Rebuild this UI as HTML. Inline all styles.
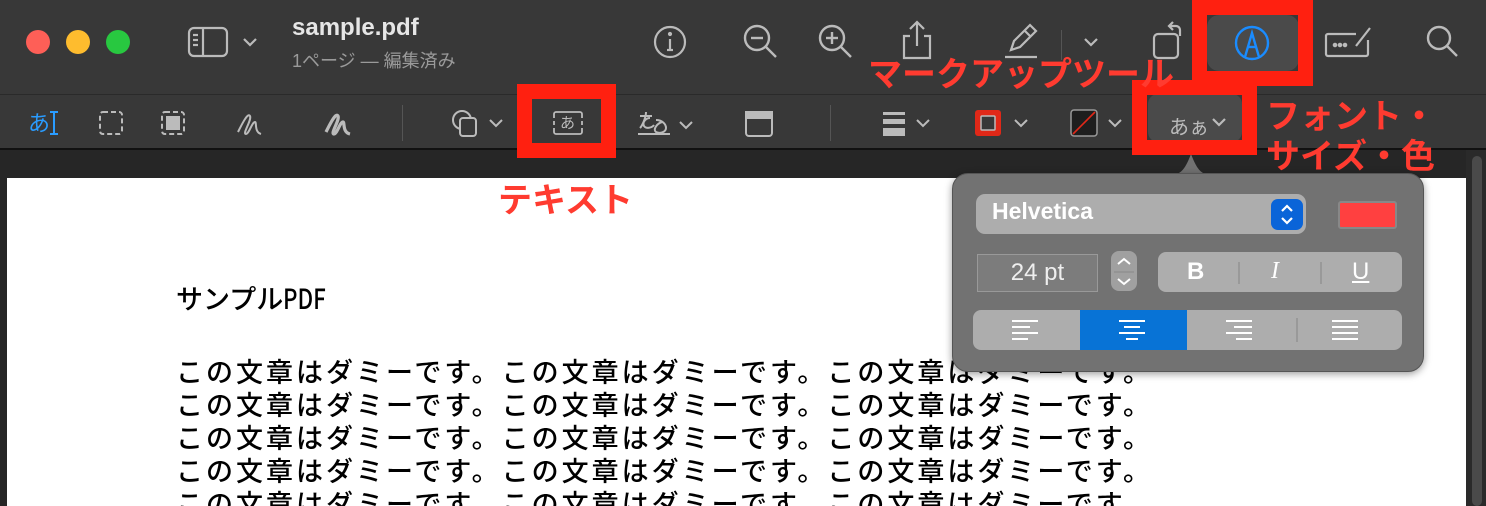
<!DOCTYPE html>
<html><head><meta charset="utf-8">
<style>
*{margin:0;padding:0;box-sizing:border-box}
html,body{width:1486px;height:506px;overflow:hidden}
body{background:#262626;position:relative;font-family:"Liberation Sans","Noto Sans CJK JP",sans-serif}
.abs{position:absolute}
.top{left:0;top:0;width:1486px;height:150px;background:#383838;border-bottom:2px solid #111}
.sep{left:0;top:94px;width:1486px;height:1px;background:#2a2a2a}
.dot{width:24px;height:24px;border-radius:50%;top:30px}
.page{left:7px;top:178px;width:1459px;height:328px;background:#fff}
.scroll{left:1466px;top:150px;width:20px;height:356px;background:#2a2a2a}
.thumb{left:1472px;top:156px;width:10px;height:350px;background:#4a4a4a;border-radius:5px}
.pdf{left:176px;font-family:"Noto Sans CJK JP",sans-serif;font-size:27px;font-weight:500;color:#000;letter-spacing:3px;white-space:nowrap;line-height:33px}
.red{border:15px solid #ff2010}
.lbl{color:#ff3b30;font-family:"Noto Sans CJK JP",sans-serif;font-weight:bold;font-size:34px;white-space:nowrap;line-height:40px}
svg{position:absolute;overflow:visible}
.pop{left:952px;top:173px;width:472px;height:199px;background:#727272;border-radius:16px;border:1px solid #555;box-shadow:0 2px 8px rgba(0,0,0,.4)}
.seg{background:#adadad;border-radius:8px}
</style></head><body>
<div class="abs top"></div>
<div class="abs sep"></div>
<div class="abs dot" style="left:26px;background:#fe5f57"></div>
<div class="abs dot" style="left:66px;background:#febc2e"></div>
<div class="abs dot" style="left:106px;background:#28c840"></div>

<svg style="left:188px;top:26px" width="80" height="32" fill="none" stroke="#bbb" stroke-width="2.2"><rect x="1" y="2" width="38" height="28" rx="5"/><line x1="15" y1="2" x2="15" y2="30"/><line x1="5" y1="9" x2="10" y2="9"/><line x1="5" y1="14" x2="10" y2="14"/><line x1="5" y1="19" x2="10" y2="19"/><polyline points="56,13 62,19 68,13"/></svg>
<div class="abs" style="left:292px;top:14px;color:#e6e6e6;font-weight:bold;font-size:24px">sample.pdf</div>
<div class="abs" style="left:292px;top:47px;color:#9a9a9a;font-size:18px;font-family:'Liberation Sans','Noto Sans CJK JP',sans-serif">1ページ — 編集済み</div>

<svg style="left:653px;top:25px" width="34" height="34" fill="none" stroke="#bbb" stroke-width="2.2"><circle cx="17" cy="17" r="15"/><line x1="17" y1="14" x2="17" y2="25"/><line x1="14" y1="25" x2="20" y2="25"/><circle cx="17" cy="9" r="1" fill="#bbb"/></svg>
<svg style="left:743px;top:24px" width="36" height="36" fill="none" stroke="#bbb" stroke-width="2.4"><circle cx="14" cy="14" r="12"/><line x1="23" y1="23" x2="33" y2="33"/><line x1="8" y1="14" x2="20" y2="14"/></svg>
<svg style="left:818px;top:24px" width="36" height="36" fill="none" stroke="#bbb" stroke-width="2.4"><circle cx="14" cy="14" r="12"/><line x1="23" y1="23" x2="33" y2="33"/><line x1="8" y1="14" x2="20" y2="14"/><line x1="14" y1="8" x2="14" y2="20"/></svg>
<svg style="left:900px;top:20px" width="34" height="40" fill="none" stroke="#bbb" stroke-width="2.2"><path d="M10 16H4v22h26V16h-6"/><line x1="17" y1="2" x2="17" y2="26"/><polyline points="10,9 17,2 24,9"/></svg>
<svg style="left:1003px;top:22px" width="36" height="38" fill="none" stroke="#bbb" stroke-width="2.2"><path d="M8 28l3-9L27 3l6 6-16 16z"/><line x1="21" y1="8" x2="28" y2="15"/><line x1="2" y1="35" x2="34" y2="35"/></svg>
<div class="abs" style="left:1061px;top:30px;width:1px;height:30px;background:#555"></div>
<svg style="left:1083px;top:37px" width="16" height="10" fill="none" stroke="#bbb" stroke-width="2.2"><polyline points="2,2 8,8 14,2"/></svg>
<svg style="left:1152px;top:20px" width="40" height="40" fill="none" stroke="#bbb" stroke-width="2.2"><rect x="2" y="14" width="24" height="24" rx="4"/><path d="M28 16v-6a4 4 0 0 0-4-4h-6"/><polyline points="21,2 17,6 21,10"/></svg>
<div class="abs" style="left:1207px;top:15px;width:92px;height:56px;background:#4a4a4a;border-radius:12px"></div>
<svg style="left:1233px;top:24px" width="38" height="38" fill="none" stroke="#1a8cff" stroke-width="2.4"><circle cx="19" cy="19" r="16"/><path d="M12 33L19 9l7 24"/><line x1="15" y1="23" x2="23" y2="23"/></svg>
<svg style="left:1324px;top:24px" width="48" height="34" fill="none" stroke="#bbb" stroke-width="2.2"><path d="M32 10H4a2 2 0 0 0-2 2v18a2 2 0 0 0 2 2h38a2 2 0 0 0 2-2V16"/><line x1="32" y1="22" x2="46" y2="4"/><circle cx="11" cy="21" r="1.2" fill="#bbb"/><circle cx="16" cy="21" r="1.2" fill="#bbb"/><circle cx="21" cy="21" r="1.2" fill="#bbb"/></svg>
<svg style="left:1425px;top:24px" width="36" height="36" fill="none" stroke="#bbb" stroke-width="2.4"><circle cx="14" cy="14" r="11"/><line x1="22" y1="22" x2="32" y2="32"/></svg>

<div class="abs" style="left:28px;top:106px;color:#2a9cff;font-size:22px;font-family:'Noto Sans CJK JP',sans-serif">あ</div>
<svg style="left:50px;top:110px" width="8" height="28" stroke="#2a9cff" stroke-width="2"><line x1="4" y1="2" x2="4" y2="24"/><line x1="0" y1="2" x2="8" y2="2"/><line x1="0" y1="24" x2="8" y2="24"/></svg>
<svg style="left:98px;top:110px" width="26" height="26" fill="none" stroke="#bbb" stroke-width="2" stroke-dasharray="5 3"><rect x="2" y="2" width="22" height="22" rx="3"/></svg>
<svg style="left:160px;top:110px" width="26" height="26" fill="none" stroke="#bbb" stroke-width="2"><rect x="2" y="2" width="22" height="22" rx="3" stroke-dasharray="5 3"/><rect x="6" y="6" width="14" height="14" fill="#bbb" stroke="none"/></svg>
<svg style="left:236px;top:110px" width="28" height="28" fill="none" stroke="#bbb" stroke-width="2"><path d="M2 22C6 14 12 2 14 6 16 10 6 24 10 24 13 24 16 12 19 12 21 12 18 22 25 24"/></svg>
<svg style="left:324px;top:110px" width="30" height="28" fill="none" stroke="#bbb" stroke-width="3.2"><path d="M2 22C6 14 12 2 14 6 16 10 6 24 10 24 13 24 16 12 19 12 21 12 18 22 26 24"/></svg>
<div class="abs" style="left:402px;top:105px;width:1px;height:36px;background:#555"></div>
<svg style="left:450px;top:108px" width="56" height="30" fill="none" stroke="#bbb" stroke-width="2"><circle cx="12" cy="12" r="9"/><rect x="10" y="10" width="16" height="18" rx="3" fill="#383838"/><polyline points="40,12 46,18 52,12"/></svg>
<div class="abs" style="left:533px;top:99px;width:67px;height:44px;background:#383838"></div>
<svg style="left:551px;top:110px" width="34" height="26" fill="none" stroke="#bbb" stroke-width="1.8"><path d="M3 8V4a2 2 0 0 1 2-2h24a2 2 0 0 1 2 2v4M3 18v4a2 2 0 0 0 2 2h24a2 2 0 0 0 2-2v-4"/><line x1="3" y1="11" x2="3" y2="15"/><line x1="31" y1="11" x2="31" y2="15"/></svg>
<div class="abs" style="left:560px;top:112px;color:#bbb;font-size:15px;font-family:'Noto Sans CJK JP',sans-serif">あ</div>
<svg style="left:636px;top:108px" width="60" height="34" fill="none" stroke="#bbb" stroke-width="2"><path d="M4 8h12M10 4c0 6-4 14-6 16M14 10c-4 0-8 4-6 8 2 3 8 2 10-1"/><path d="M20 12c6 0 10 4 10 8s-6 6-10 4c-3-2 0-8 6-10"/><line x1="2" y1="26" x2="34" y2="26"/><polyline points="44,14 50,20 56,14"/></svg>
<svg style="left:744px;top:110px" width="30" height="28" fill="none" stroke="#bbb" stroke-width="2"><rect x="2" y="2" width="26" height="24" rx="3"/><rect x="2" y="2" width="26" height="6" fill="#bbb"/></svg>
<div class="abs" style="left:830px;top:105px;width:1px;height:36px;background:#555"></div>
<svg style="left:881px;top:110px" width="54" height="28" fill="none"><rect x="2" y="2" width="22" height="3" fill="#bbb"/><rect x="2" y="9" width="22" height="5" fill="#bbb"/><rect x="2" y="18" width="22" height="8" fill="#bbb"/><polyline points="36,10 42,16 48,10" stroke="#bbb" stroke-width="2"/></svg>
<svg style="left:973px;top:108px" width="60" height="30" fill="none"><rect x="2" y="2" width="26" height="26" rx="3" fill="#e02818"/><rect x="8" y="8" width="14" height="14" rx="1" fill="#383838" stroke="#bbb" stroke-width="1.5"/><polyline points="42,12 48,18 54,12" stroke="#bbb" stroke-width="2"/></svg>
<svg style="left:1069px;top:108px" width="60" height="30" fill="none"><rect x="2" y="2" width="26" height="26" rx="3" fill="#1e1e1e" stroke="#999" stroke-width="1.5"/><line x1="4" y1="26" x2="26" y2="4" stroke="#e02818" stroke-width="1.6"/><polyline points="40,12 46,18 52,12" stroke="#bbb" stroke-width="2"/></svg>
<div class="abs" style="left:1148px;top:94px;width:94px;height:48px;background:#4a4a4a;border-radius:10px"></div>
<div class="abs" style="left:1169px;top:111px;color:#bbb;font-size:20px;font-family:'Noto Sans CJK JP',sans-serif">あぁ</div>
<svg style="left:1211px;top:117px" width="16" height="10" fill="none" stroke="#bbb" stroke-width="2.2"><polyline points="2,2 8,8 14,2"/></svg>

<div class="abs scroll"></div>
<div class="abs thumb"></div>
<div class="abs page"></div>
<div class="abs pdf" style="top:281px;letter-spacing:0">サンプル<span style="font-size:28px;display:inline-block;transform:scaleX(.8);transform-origin:left">PDF</span></div>
<div class="abs pdf" style="top:354px">この文章はダミーです。この文章はダミーです。この文章はダミーです。<br>この文章はダミーです。この文章はダミーです。この文章はダミーです。<br>この文章はダミーです。この文章はダミーです。この文章はダミーです。<br>この文章はダミーです。この文章はダミーです。この文章はダミーです。<br>この文章はダミーです。この文章はダミーです。この文章はダミーです。</div>

<svg style="left:1168px;top:150px" width="46" height="26"><path d="M0 25C12 25 16 22 23 4 30 22 34 25 46 25Z" fill="#727272"/></svg>
<div class="abs pop"></div>
<div class="abs seg" style="left:976px;top:194px;width:330px;height:40px;border-radius:9px"></div>
<div class="abs" style="left:992px;top:198px;color:#fff;font-weight:bold;font-size:23px">Helvetica</div>
<div class="abs" style="left:1271px;top:199px;width:32px;height:31px;background:#0a64d8;border-radius:7px"></div>
<svg style="left:1279px;top:203px" width="16" height="24" fill="none" stroke="#fff" stroke-width="2.2"><polyline points="3,8 8,3 13,8"/><polyline points="3,15 8,20 13,15"/></svg>
<div class="abs" style="left:1338px;top:201px;width:59px;height:28px;background:#ff4040;border:2px solid #888;border-radius:3px"></div>
<div class="abs" style="left:977px;top:254px;width:121px;height:38px;background:#7c7c7c;border:1px solid #999;color:#eee;font-size:24px;text-align:center;line-height:36px">24 pt</div>
<div class="abs" style="left:1111px;top:251px;width:26px;height:40px;background:#a0a0a0;border-radius:8px"></div>
<svg style="left:1114px;top:255px" width="20" height="34" fill="none" stroke="#fff" stroke-width="2"><polyline points="4,9 10,4 16,9"/><line x1="0" y1="17" x2="20" y2="17" stroke="#888" stroke-width="1"/><polyline points="4,24 10,29 16,24"/></svg>
<div class="abs seg" style="left:1158px;top:252px;width:244px;height:40px"></div>
<div class="abs" style="left:1187px;top:258px;color:#fff;font-weight:bold;font-size:24px">B</div>
<div class="abs" style="left:1238px;top:262px;width:2px;height:22px;background:#999"></div>
<div class="abs" style="left:1271px;top:258px;color:#fff;font-style:italic;font-size:24px;font-family:'Liberation Serif',serif">I</div>
<div class="abs" style="left:1320px;top:262px;width:2px;height:22px;background:#999"></div>
<div class="abs" style="left:1352px;top:258px;color:#fff;font-size:24px;text-decoration:underline">U</div>
<div class="abs seg" style="left:973px;top:310px;width:429px;height:40px"></div>
<div class="abs" style="left:1080px;top:310px;width:107px;height:40px;background:#0873d6"></div>
<div class="abs" style="left:1296px;top:318px;width:2px;height:24px;background:#999"></div>
<svg style="left:1010px;top:318px" width="380" height="24" stroke="#fff" stroke-width="2">
<line x1="2" y1="3" x2="28" y2="3"/><line x1="2" y1="9" x2="20" y2="9"/><line x1="2" y1="15" x2="28" y2="15"/><line x1="2" y1="21" x2="18" y2="21"/>
<line x1="109" y1="3" x2="135" y2="3"/><line x1="114" y1="9" x2="130" y2="9"/><line x1="109" y1="15" x2="135" y2="15"/><line x1="116" y1="21" x2="128" y2="21"/>
<line x1="216" y1="3" x2="242" y2="3"/><line x1="224" y1="9" x2="242" y2="9"/><line x1="216" y1="15" x2="242" y2="15"/><line x1="226" y1="21" x2="242" y2="21"/>
<line x1="322" y1="3" x2="348" y2="3"/><line x1="322" y1="9" x2="348" y2="9"/><line x1="322" y1="15" x2="348" y2="15"/><line x1="322" y1="21" x2="348" y2="21"/>
</svg>

<div class="abs red" style="left:517px;top:84px;width:99px;height:74px"></div>
<div class="abs red" style="left:1192px;top:0px;width:121px;height:86px"></div>
<div class="abs red" style="left:1132px;top:80px;width:125px;height:75px"></div>
<div class="abs lbl" style="left:498px;top:178px">テキスト</div>
<div class="abs lbl" style="left:868px;top:52px">マークアップツール</div>
<div class="abs lbl" style="left:1266px;top:94px">フォント・</div>
<div class="abs lbl" style="left:1266px;top:134px">サイズ・色</div>
</body></html>
